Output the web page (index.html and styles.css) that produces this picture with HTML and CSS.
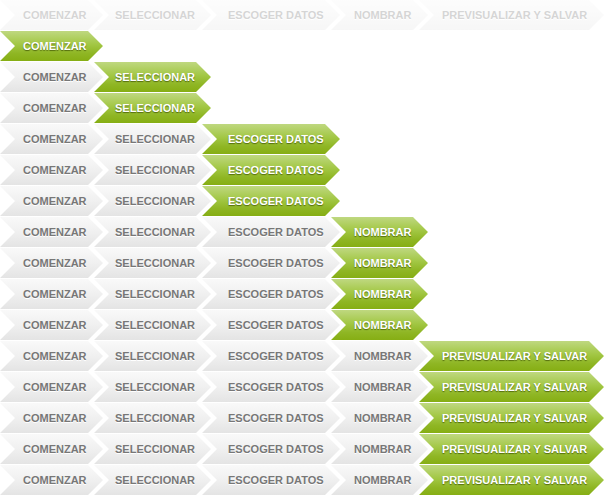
FILE: index.html
```html
<!DOCTYPE html>
<html>
<head>
<meta charset="utf-8">
<link rel="stylesheet" href="styles.css">
</head>
<body>
<div class="wizard">
  <ol class="steps faded">
    <li class="step s1">COMENZAR</li><li class="step s2">SELECCIONAR</li><li class="step s3">ESCOGER DATOS</li><li class="step s4">NOMBRAR</li><li class="step s5">PREVISUALIZAR Y SALVAR</li>
  </ol>
  <ol class="steps">
    <li class="step s1 on">COMENZAR</li>
  </ol>
  <ol class="steps">
    <li class="step s1">COMENZAR</li><li class="step s2 on">SELECCIONAR</li>
  </ol>
  <ol class="steps">
    <li class="step s1">COMENZAR</li><li class="step s2 on">SELECCIONAR</li>
  </ol>
  <ol class="steps">
    <li class="step s1">COMENZAR</li><li class="step s2">SELECCIONAR</li><li class="step s3 on">ESCOGER DATOS</li>
  </ol>
  <ol class="steps">
    <li class="step s1">COMENZAR</li><li class="step s2">SELECCIONAR</li><li class="step s3 on">ESCOGER DATOS</li>
  </ol>
  <ol class="steps">
    <li class="step s1">COMENZAR</li><li class="step s2">SELECCIONAR</li><li class="step s3 on">ESCOGER DATOS</li>
  </ol>
  <ol class="steps">
    <li class="step s1">COMENZAR</li><li class="step s2">SELECCIONAR</li><li class="step s3">ESCOGER DATOS</li><li class="step s4 on">NOMBRAR</li>
  </ol>
  <ol class="steps">
    <li class="step s1">COMENZAR</li><li class="step s2">SELECCIONAR</li><li class="step s3">ESCOGER DATOS</li><li class="step s4 on">NOMBRAR</li>
  </ol>
  <ol class="steps">
    <li class="step s1">COMENZAR</li><li class="step s2">SELECCIONAR</li><li class="step s3">ESCOGER DATOS</li><li class="step s4 on">NOMBRAR</li>
  </ol>
  <ol class="steps">
    <li class="step s1">COMENZAR</li><li class="step s2">SELECCIONAR</li><li class="step s3">ESCOGER DATOS</li><li class="step s4 on">NOMBRAR</li>
  </ol>
  <ol class="steps">
    <li class="step s1">COMENZAR</li><li class="step s2">SELECCIONAR</li><li class="step s3">ESCOGER DATOS</li><li class="step s4">NOMBRAR</li><li class="step s5 on">PREVISUALIZAR Y SALVAR</li>
  </ol>
  <ol class="steps">
    <li class="step s1">COMENZAR</li><li class="step s2">SELECCIONAR</li><li class="step s3">ESCOGER DATOS</li><li class="step s4">NOMBRAR</li><li class="step s5 on">PREVISUALIZAR Y SALVAR</li>
  </ol>
  <ol class="steps">
    <li class="step s1">COMENZAR</li><li class="step s2">SELECCIONAR</li><li class="step s3">ESCOGER DATOS</li><li class="step s4">NOMBRAR</li><li class="step s5 on">PREVISUALIZAR Y SALVAR</li>
  </ol>
  <ol class="steps">
    <li class="step s1">COMENZAR</li><li class="step s2">SELECCIONAR</li><li class="step s3">ESCOGER DATOS</li><li class="step s4">NOMBRAR</li><li class="step s5 on">PREVISUALIZAR Y SALVAR</li>
  </ol>
  <ol class="steps">
    <li class="step s1">COMENZAR</li><li class="step s2">SELECCIONAR</li><li class="step s3">ESCOGER DATOS</li><li class="step s4">NOMBRAR</li><li class="step s5 on">PREVISUALIZAR Y SALVAR</li>
  </ol>
</div>
</body>
</html>
```
FILE: styles.css
```css
html, body {
  margin: 0;
  padding: 0;
  background: #ffffff;
}

.wizard {
  display: flex;
  flex-direction: column;
  gap: 1px;
  width: 604px;
}

.steps {
  display: flex;
  margin: 0;
  padding: 0;
  list-style: none;
  height: 30px;
}

.steps.faded {
  opacity: 0.3;
}

.step {
  flex: none;
  box-sizing: border-box;
  height: 30px;
  line-height: 30px;
  padding-left: 23px;
  margin-left: -9px;
  white-space: nowrap;
  font-family: "Liberation Sans", Arial, sans-serif;
  font-size: 11px;
  font-weight: bold;
  color: #777777;
  text-shadow: 0 1px 0 #ffffff;
  background: linear-gradient(#f9f9f9 0%, #f0f0f0 50%, #e4e4e4 100%);
  clip-path: polygon(0 0, calc(100% - 15px) 0, 100% 50%, calc(100% - 15px) 100%, 0 100%, 15px 50%);
}

.step.s1 { margin-left: 0; width: 103px; }
.step.s2 { width: 117px; padding-left: 21px; }
.step.s3 { width: 138px; padding-left: 26px; }
.step.s4 { width: 97px; }
.step.s5 { width: 185px; }

.step.on {
  color: #ffffff;
  text-shadow: 0 1px 1px rgba(60, 80, 0, 0.75);
  background: linear-gradient(#bfd880 0%, #a2c744 45%, #8fb624 75%, #86ae14 100%);
}
```
